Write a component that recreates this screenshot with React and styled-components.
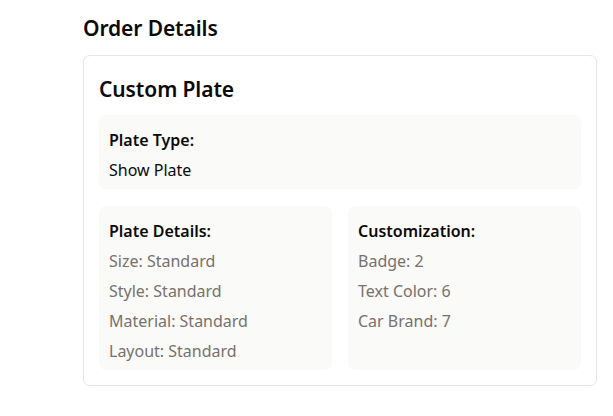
import styled, { createGlobalStyle } from "styled-components";

const GlobalStyle = createGlobalStyle`
  body {
    margin: 0;
    background: #fff;
    font-family: "Noto Sans", "Open Sans", sans-serif;
    color: #0c0a09;
  }
`;

const plateDetails = [
  "Size: Standard",
  "Style: Standard",
  "Material: Standard",
  "Layout: Standard",
];

const customization = ["Badge: 2", "Text Color: 6", "Car Brand: 7"];

function App() {
  return (
    <>
      <GlobalStyle />
      <Page>
        <PageTitle>Order Details</PageTitle>
        <Card>
          <CardTitle>Custom Plate</CardTitle>
          <InfoBox>
            <Label>Plate Type:</Label>
            <Value>Show Plate</Value>
          </InfoBox>
          <Grid>
            <InfoBox>
              <Label>Plate Details:</Label>
              {plateDetails.map((item) => (
                <Value key={item} muted>
                  {item}
                </Value>
              ))}
            </InfoBox>
            <InfoBox>
              <Label>Customization:</Label>
              {customization.map((item) => (
                <Value key={item} muted>
                  {item}
                </Value>
              ))}
            </InfoBox>
          </Grid>
        </Card>
      </Page>
    </>
  );
}

const Page = styled.div`
  width: 514px;
  padding: 14px 0 0 83px;
`;

const PageTitle = styled.h2`
  margin: 0 0 12px;
  font-size: 21px;
  font-weight: 600;
  line-height: 29px;
  letter-spacing: -0.1px;
`;

const Card = styled.div`
  display: flex;
  flex-direction: column;
  padding: 15px;
  border: 1px solid #e7e5e4;
  border-radius: 7px;
  box-shadow: 0 1px 2px rgba(0, 0, 0, 0.04);
`;

const CardTitle = styled.h3`
  margin: 0 0 8px;
  font-size: 21px;
  font-weight: 600;
  line-height: 36px;
  letter-spacing: -0.1px;
`;

const InfoBox = styled.div`
  display: flex;
  flex-direction: column;
  gap: 6px;
  padding: 13px 10px 7px;
  background: #fafaf9;
  border-radius: 7px;
`;

const Grid = styled.div`
  display: grid;
  grid-template-columns: 1fr 1fr;
  gap: 16px;
  margin-top: 17px;
`;

const Label = styled.div`
  font-size: 16px;
  font-weight: 600;
  line-height: 24px;
`;

const Value = styled.div`
  font-size: 16px;
  line-height: 24px;
  color: ${({ muted }) => (muted ? "#78716c" : "#0c0a09")};
`;

export default App;
